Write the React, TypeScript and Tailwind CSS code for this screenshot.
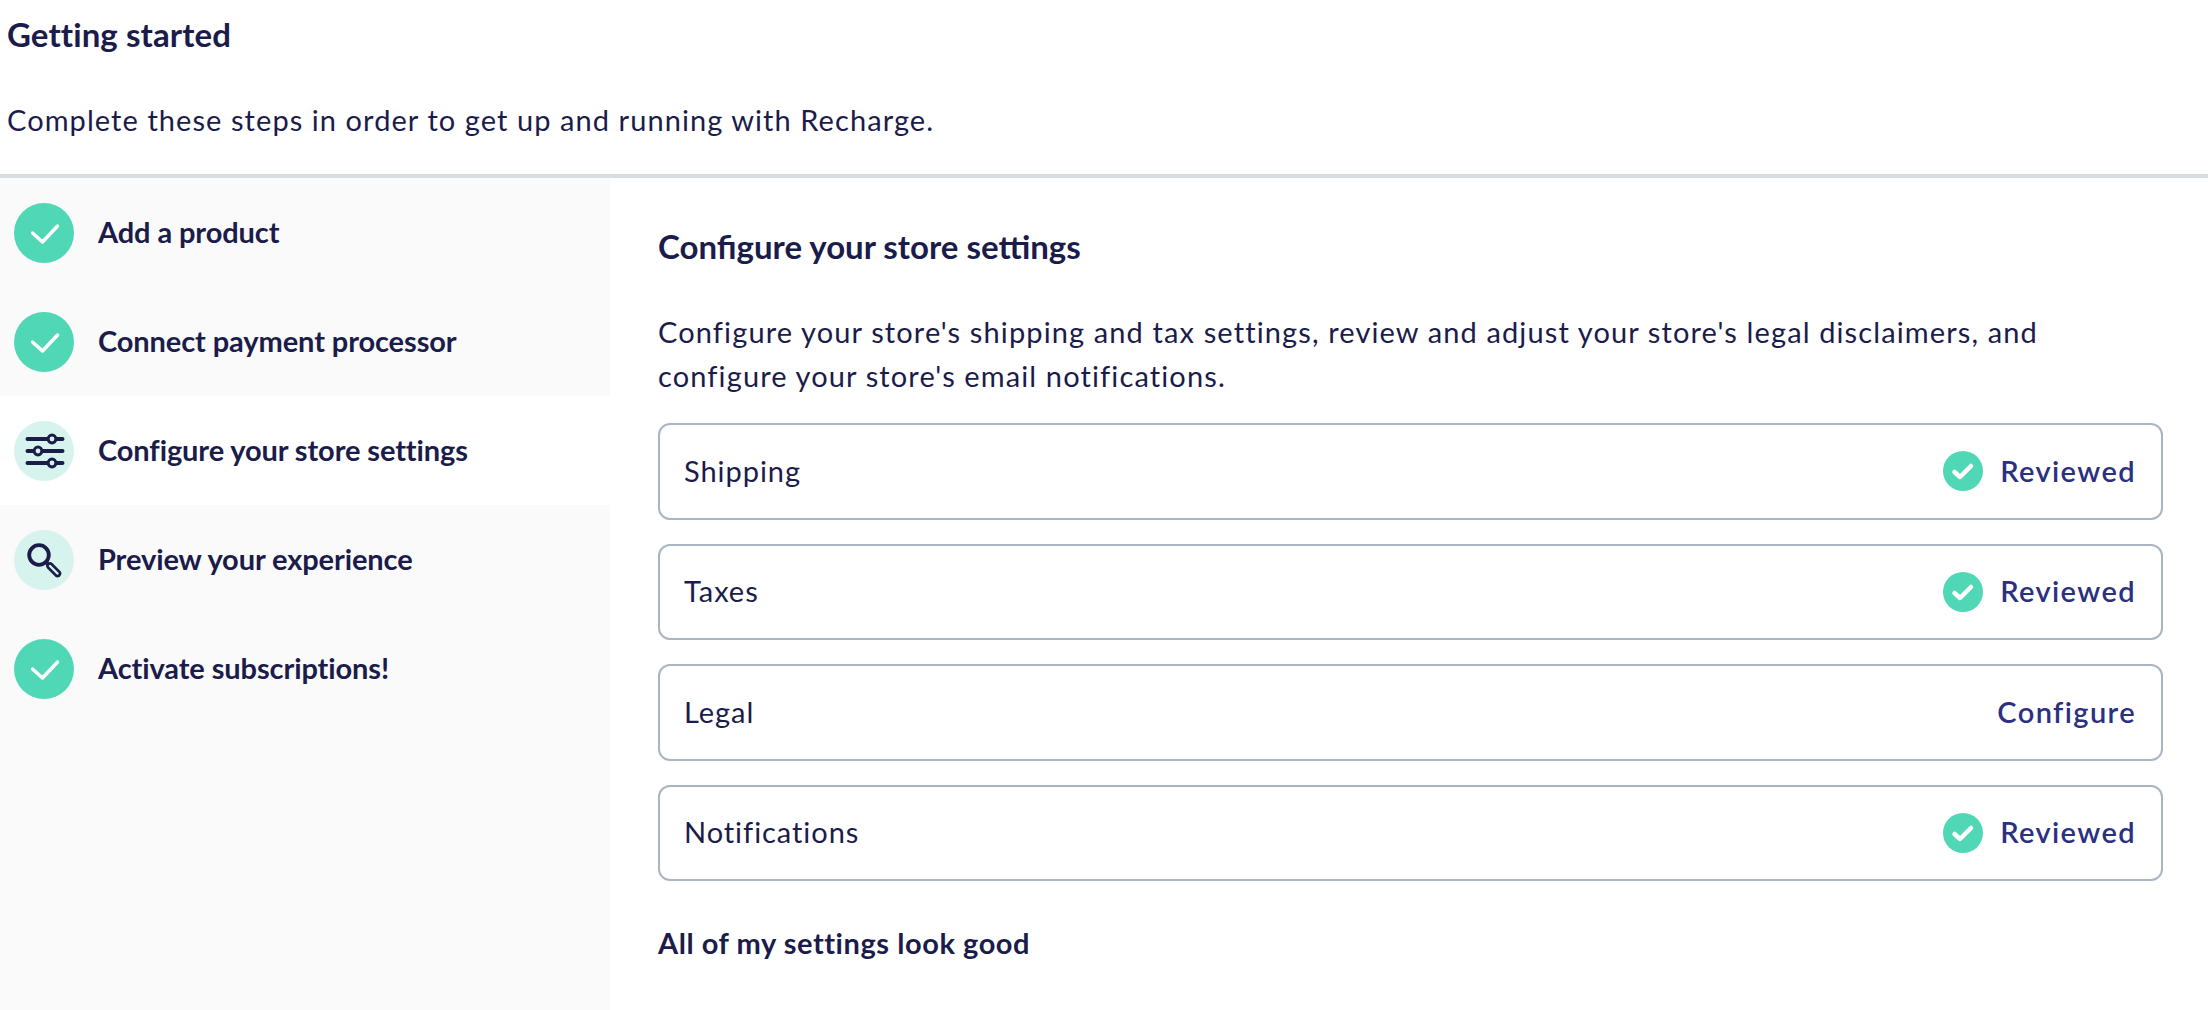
const font = "font-['Lato','Open_Sans',sans-serif]";

function BigCheck() {
  return (
    <div className="h-[60px] w-[60px] shrink-0 rounded-full bg-[#50d7b6]">
      <svg width="60" height="60" viewBox="0 0 60 60" fill="none">
        <path d="M18.5 30L28.5 39L43.5 23" stroke="#fff" strokeWidth="3.5" strokeLinecap="round" strokeLinejoin="round" />
      </svg>
    </div>
  );
}

function SlidersIcon() {
  return (
    <div className="h-[60px] w-[60px] shrink-0 rounded-full bg-[#d7f3ee]">
      <svg width="60" height="60" viewBox="0 0 60 60" fill="none" stroke="#1b1c4a" strokeWidth="4" strokeLinecap="round">
        <path d="M13.5 18H48.5M13.5 30H48.5M13.5 42H48.5" />
        <circle cx="38" cy="18" r="3.9" fill="#d7f3ee" strokeWidth="3" />
        <circle cx="24" cy="30" r="3.9" fill="#d7f3ee" strokeWidth="3" />
        <circle cx="38" cy="42" r="3.9" fill="#d7f3ee" strokeWidth="3" />
      </svg>
    </div>
  );
}

function SearchIcon() {
  return (
    <div className="h-[60px] w-[60px] shrink-0 rounded-full bg-[#d7f3ee]">
      <svg width="60" height="60" viewBox="0 0 60 60" fill="none" stroke="#1b1c4a">
        <circle cx="25" cy="25" r="9.8" strokeWidth="3.8" />
        <path d="M32 32L36 36" strokeWidth="3.8" />
        <path d="M36 36L43.5 43.5" strokeWidth="7.5" strokeLinecap="round" />
        <path d="M36 36L43.5 43.5" stroke="#d7f3ee" strokeWidth="2.4" strokeLinecap="round" />
      </svg>
    </div>
  );
}

function SmallCheck() {
  return (
    <div className="h-10 w-10 shrink-0 rounded-full bg-[#50d7b6]">
      <svg width="40" height="40" viewBox="0 0 40 40" fill="none">
        <path d="M11.5 21L17 26L28 15" stroke="#fff" strokeWidth="4.5" strokeLinecap="round" strokeLinejoin="round" />
      </svg>
    </div>
  );
}

function Step({ icon, label, active }: { icon: React.ReactNode; label: string; active?: boolean }) {
  return (
    <div className={`flex h-[109px] items-center gap-6 pl-[14px] ${active ? "bg-white" : ""}`}>
      {icon}
      <span className="relative -top-[1px] text-[29px] font-bold tracking-[-0.1px] text-[#1b1c4a]">{label}</span>
    </div>
  );
}

function Card({ label, reviewed }: { label: string; reviewed?: boolean }) {
  return (
    <div className="flex h-[96.5px] items-center justify-between rounded-[12px] border-2 border-[#a9b5c2] pl-6 pr-[25px]">
      <span className="relative -top-[1px] text-[29px] tracking-[0.95px] text-[#1b1c4a]">{label}</span>
      {reviewed ? (
        <div className="flex items-center gap-[17px]">
          <SmallCheck />
          <span className="relative -top-[1px] text-[29px] font-semibold tracking-[1.4px] text-[#2b3080]">Reviewed</span>
        </div>
      ) : (
        <span className="relative -top-[1px] text-[29px] font-semibold tracking-[1.4px] text-[#2b3080]">Configure</span>
      )}
    </div>
  );
}

export default function App() {
  return (
    <div className={`flex h-[1010px] w-[2208px] flex-col overflow-hidden bg-white ${font}`}>
      <header className="h-[178px] shrink-0 border-b-4 border-[#d8dde2] pl-[7px] pt-[13px]">
        <h1 className="text-[33px] font-bold leading-[42px] tracking-[0.1px] text-[#1b1c4a]">Getting started</h1>
        <p className="mt-[47px] text-[29px] leading-[36px] tracking-[1.07px] text-[#1b1c4a]">
          Complete these steps in order to get up and running with Recharge.
        </p>
      </header>
      <div className="flex min-h-0 flex-1">
        <aside className="w-[610px] shrink-0 bg-[#fafafa]">
          <Step icon={<BigCheck />} label="Add a product" />
          <Step icon={<BigCheck />} label="Connect payment processor" />
          <Step icon={<SlidersIcon />} label="Configure your store settings" active />
          <Step icon={<SearchIcon />} label="Preview your experience" />
          <Step icon={<BigCheck />} label="Activate subscriptions!" />
        </aside>
        <main className="min-w-0 flex-1 pl-[48px] pr-[45px] pt-[47px]">
          <h2 className="text-[33px] font-bold leading-[42px] text-[#1b1c4a]">Configure your store settings</h2>
          <p className="mt-[43px] max-w-[1450px] text-[29px] leading-[44px] tracking-[1.12px] text-[#1b1c4a]">
            Configure your store's shipping and tax settings, review and adjust your store's legal disclaimers, and configure your store's email notifications.
          </p>
          <div className="mt-[25px] flex flex-col gap-[24px]">
            <Card label="Shipping" reviewed />
            <Card label="Taxes" reviewed />
            <Card label="Legal" />
            <Card label="Notifications" reviewed />
          </div>
          <p className="mt-[40px] text-[29px] font-bold tracking-[0.55px] text-[#1b1c4a]">All of my settings look good</p>
        </main>
      </div>
    </div>
  );
}
